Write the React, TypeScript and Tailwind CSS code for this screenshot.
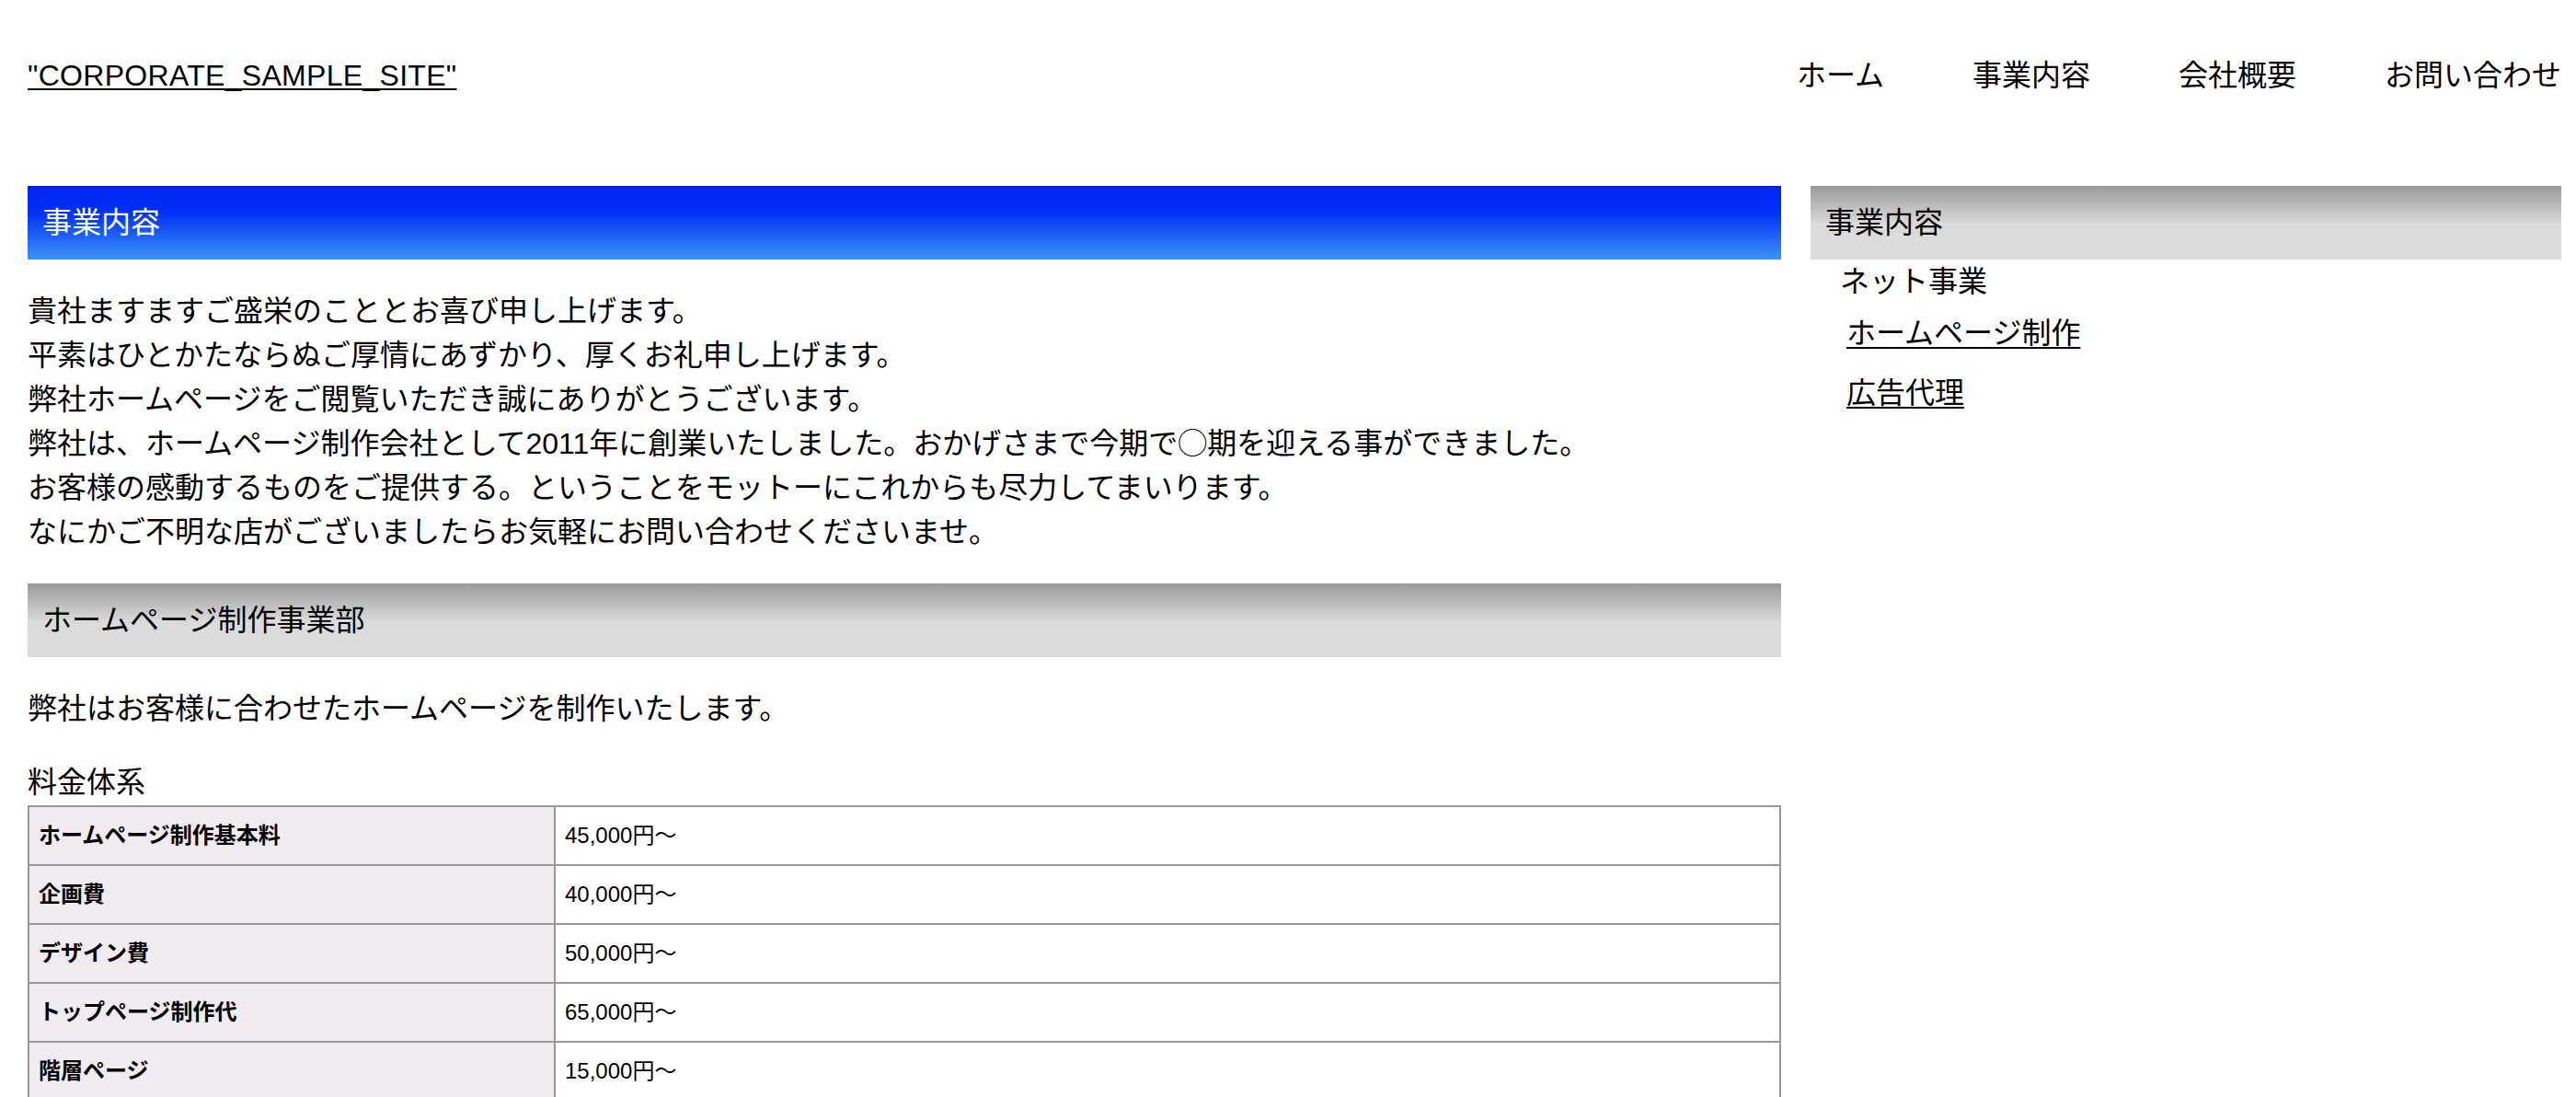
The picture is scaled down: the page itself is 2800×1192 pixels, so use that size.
import React from "react";

const navItems = ["ホーム", "事業内容", "会社概要", "お問い合わせ"];

const prices = [
  { name: "ホームページ制作基本料", price: "45,000円〜" },
  { name: "企画費", price: "40,000円〜" },
  { name: "デザイン費", price: "50,000円〜" },
  { name: "トップページ制作代", price: "65,000円〜" },
  { name: "階層ページ", price: "15,000円〜" },
];

export default function App() {
  return (
    <div className="h-[1192px] overflow-hidden bg-white text-black font-['Liberation_Sans','Noto_Sans_CJK_JP',sans-serif] text-[32px] leading-[48px]">
      {/* Header */}
      <header className="flex h-[164px] items-center justify-between pl-[30px] pr-[16px]">
        <a href="#" className="underline underline-offset-[3px] decoration-[2px] tracking-[0.3px]">
          "CORPORATE_SAMPLE_SITE"
        </a>
        <nav>
          <ul className="flex gap-[96px]">
            {navItems.map((item) => (
              <li key={item}>
                <a href="#">{item}</a>
              </li>
            ))}
          </ul>
        </nav>
      </header>

      <div className="flex gap-[32px] pl-[30px] pr-[16px] pt-[38px]">
        {/* Main column */}
        <main className="w-[1906px] shrink-0">
          <h2 className="flex h-[80px] items-center pl-[16px] text-white bg-[linear-gradient(to_bottom,#0022f5_0%,#0030f5_35%,#3c93f5_100%)]">
            事業内容
          </h2>
          <p className="mt-[32px]">
            貴社ますますご盛栄のこととお喜び申し上げます。
            <br />
            平素はひとかたならぬご厚情にあずかり、厚くお礼申し上げます。
            <br />
            弊社ホームページをご閲覧いただき誠にありがとうございます。
            <br />
            弊社は、ホームページ制作会社として2011年に創業いたしました。おかげさまで今期で◯期を迎える事ができました。
            <br />
            お客様の感動するものをご提供する。ということをモットーにこれからも尽力してまいります。
            <br />
            なにかご不明な店がございましたらお気軽にお問い合わせくださいませ。
          </p>

          <h2 className="mt-[32px] flex h-[80px] items-center pl-[16px] bg-[linear-gradient(to_bottom,#9a9a9a_0%,#dbdbdb_52%,#dbdbdb_100%)]">
            ホームページ制作事業部
          </h2>
          <p className="mt-[32px]">弊社はお客様に合わせたホームページを制作いたします。</p>

          <p className="mt-[32px]">料金体系</p>
          <div className="mt-[1px] border-x-2 border-t-2 border-[#999999] text-[24px] leading-[36px]">
            {prices.map((row) => (
              <div key={row.name} className="flex h-[64px] border-b-2 border-[#999999]">
                <div className="flex w-[572px] shrink-0 items-center border-r-2 border-[#999999] bg-[#efebef] px-[10px] font-bold">
                  {row.name}
                </div>
                <div className="flex flex-1 items-center px-[10px]">{row.price}</div>
              </div>
            ))}
          </div>
        </main>

        {/* Sidebar */}
        <aside className="w-[816px] shrink-0">
          <h2 className="flex h-[80px] items-center pl-[16px] bg-[linear-gradient(to_bottom,#9a9a9a_0%,#dbdbdb_52%,#dbdbdb_100%)]">
            事業内容
          </h2>
          <ul className="pl-[32px]">
            <li>
              ネット事業
              <ul className="pl-[7px]">
                <li className="mt-[8px]">
                  <a href="#" className="underline underline-offset-[4px] decoration-[2px]">
                    ホームページ制作
                  </a>
                </li>
                <li className="mt-[17px]">
                  <a href="#" className="underline underline-offset-[4px] decoration-[2px]">
                    広告代理
                  </a>
                </li>
              </ul>
            </li>
          </ul>
        </aside>
      </div>
    </div>
  );
}
